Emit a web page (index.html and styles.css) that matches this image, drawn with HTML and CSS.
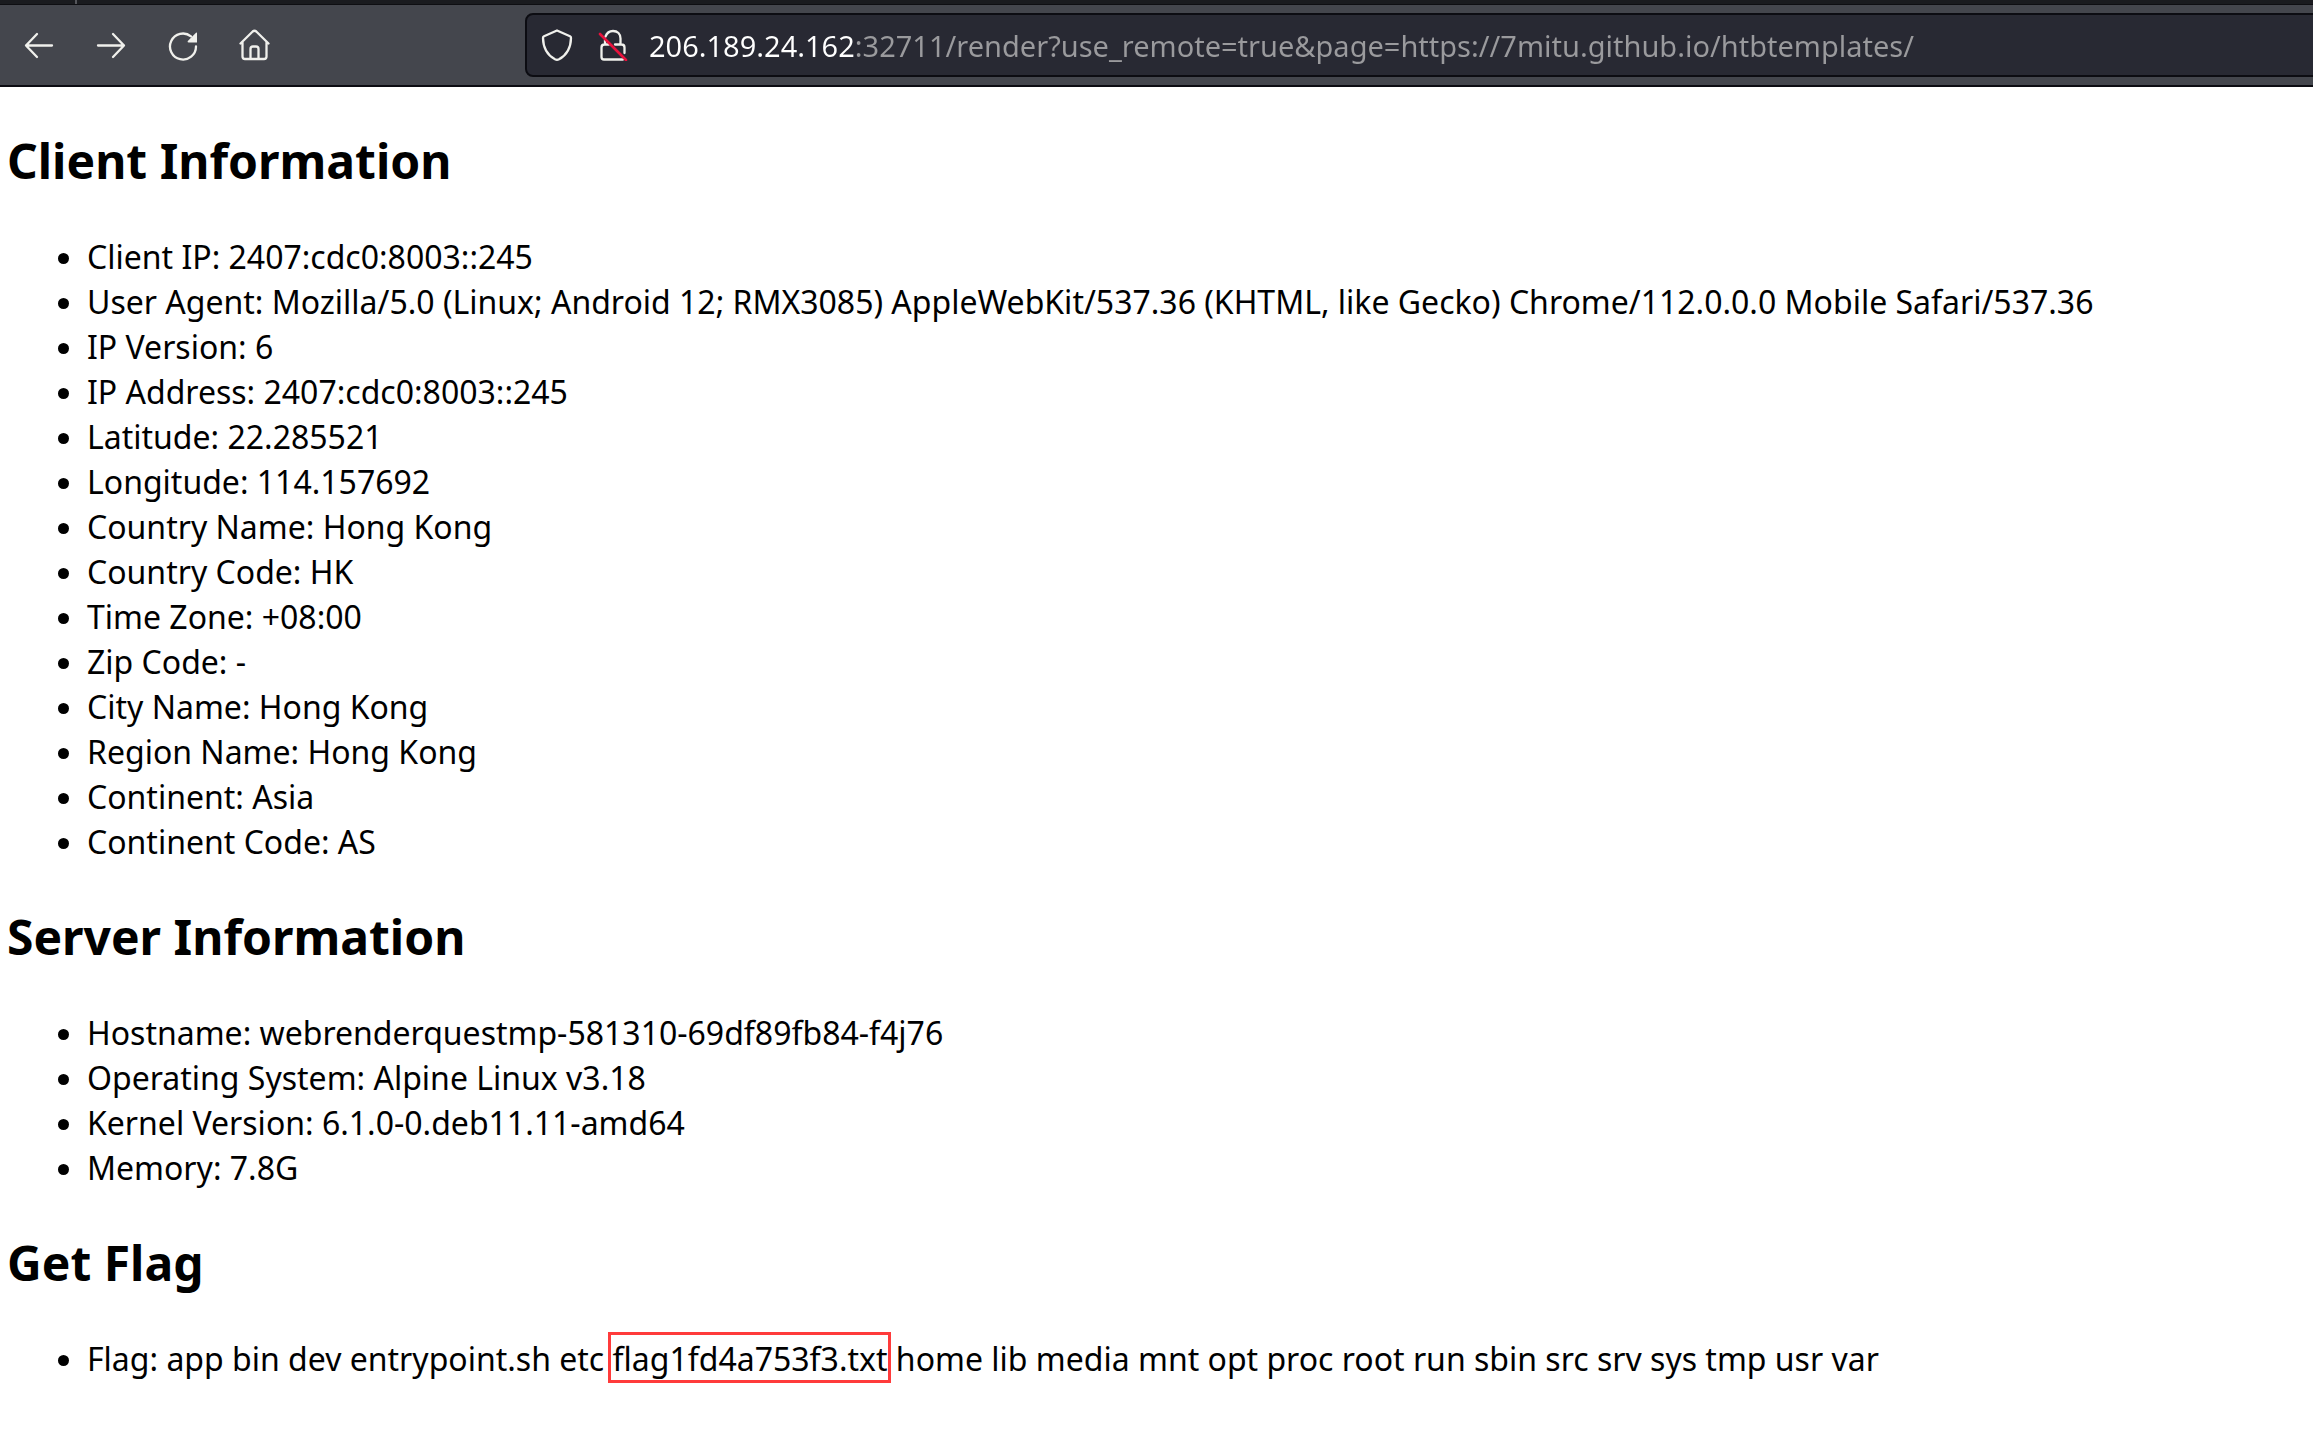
FILE: index.html
```html
<!DOCTYPE html>
<html lang="en">
<head>
<meta charset="utf-8">
<meta name="viewport" content="width=device-width, initial-scale=1">
<title>Client Information</title>
<link rel="stylesheet" href="styles.css">
</head>
<body>
<header class="browser">
  <div class="tabs"><span class="tab-edge"></span></div>
  <nav class="toolbar" aria-label="Browser toolbar">
    <div class="nav-buttons">
      <button class="nav-button" type="button" aria-label="Back">
        <svg class="icon" viewBox="0 0 32 32"><path d="M29 16.500H3M14 5L3 16.500 14 28"/></svg>
      </button>
      <button class="nav-button" type="button" aria-label="Forward">
        <svg class="icon" viewBox="0 0 32 32"><path d="M3 16.500h26M18 5l11 11.500L18 28"/></svg>
      </button>
      <button class="nav-button" type="button" aria-label="Reload">
        <svg class="icon" viewBox="0 0 32 32"><path d="M29 17.500A13 13 0 1 1 24 7.300"/><path class="solid" d="M30 3.500v10h-8.500q-1.500-.5-.7-1.600L29 3.700z"/></svg>
      </button>
      <button class="nav-button" type="button" aria-label="Home">
        <svg class="icon" viewBox="0 0 32 32"><path d="M1.500 14.500L13.700 2.500q1.800-1.500 3.600 0L29.500 14.500M3.500 13v14.500q0 2.500 2.500 2.500h19q2.500 0 2.500-2.500V13M11.500 30V20q0-2.500 2.500-2.500h3q2.500 0 2.500 2.500v10"/></svg>
      </button>
    </div>
    <div class="urlbar">
      <div class="site-icons">
        <svg class="icon" viewBox="0 0 32 32"><path d="M16 1.500l13 5.700q1 .5 1 1.800C29.800 19 25 26.500 18 30.300q-2 1-4 0C7 26.500 2.200 19 2 9q0-1.300 1-1.800z"/></svg>
        <svg class="icon" viewBox="0 0 32 32"><path d="M8.500 7.500C10 3.500 13 2 16 2c4.500 0 7.500 3 7.500 7.500V15M7.500 15.500q-3 0-3 3V28q0 2.500 2.500 2.500h19M18 15.500h6.500q3 0 3 3V24M8 11v4.500h4"/><path class="strike" d="M3 5l26 26"/></svg>
      </div>
      <input class="url" type="text" aria-label="Address" spellcheck="false" value="206.189.24.162:32711/render?use_remote=true&amp;page=https://7mitu.github.io/htbtemplates/">
    </div>
  </nav>
</header>
<main class="page">
  <h2 class="title">Client Information</h2>
  <ul class="facts">
    <li>Client IP: 2407:cdc0:8003::245</li>
    <li>User Agent: Mozilla/5.0 (Linux; Android 12; RMX3085) AppleWebKit/537.36 (KHTML, like Gecko) Chrome/112.0.0.0 Mobile Safari/537.36</li>
    <li>IP Version: 6</li>
    <li>IP Address: 2407:cdc0:8003::245</li>
    <li>Latitude: 22.285521</li>
    <li>Longitude: 114.157692</li>
    <li>Country Name: Hong Kong</li>
    <li>Country Code: HK</li>
    <li>Time Zone: +08:00</li>
    <li>Zip Code: -</li>
    <li>City Name: Hong Kong</li>
    <li>Region Name: Hong Kong</li>
    <li>Continent: Asia</li>
    <li>Continent Code: AS</li>
  </ul>
  <h2 class="title">Server Information</h2>
  <ul class="facts">
    <li>Hostname: webrenderquestmp-581310-69df89fb84-f4j76</li>
    <li>Operating System: Alpine Linux v3.18</li>
    <li>Kernel Version: 6.1.0-0.deb11.11-amd64</li>
    <li>Memory: 7.8G</li>
  </ul>
  <h2 class="title">Get Flag</h2>
  <ul class="facts">
    <li>Flag: app bin dev entrypoint.sh etc <span class="marked">flag1fd4a753f3.txt</span> home lib media mnt opt proc root run sbin src srv sys tmp usr var</li>
  </ul>
</main>
</body>
</html>
```

FILE: styles.css
```css
* {
  box-sizing: border-box;
}

body {
  margin: 0;
  background: #fff;
  color: #000;
  font-family: "Noto Sans", sans-serif;
}

/* Browser chrome */
.browser {
  background: #44464d;
  border-bottom: 2px solid #0c0c12;
  overflow: hidden;
}

.tabs {
  display: flex;
  height: 5px;
  padding-left: 75px;
  background: #1a1b1f;
  border-bottom: 1px solid #0e0e12;
}

.tab-edge {
  width: 2px;
  background: #55565b;
}

.toolbar {
  display: flex;
  align-items: center;
  padding: 8px 0;
}

.nav-buttons {
  display: flex;
  flex: none;
  width: 525px;
  padding-left: 3px;
}

.nav-button {
  display: flex;
  align-items: center;
  justify-content: center;
  width: 72px;
  height: 64px;
  padding: 0;
  border: 0;
  background: none;
}

.icon {
  flex: none;
  width: 32px;
  height: 32px;
  fill: none;
  stroke: #f0f0ec;
  stroke-width: 2.3;
  stroke-linecap: round;
  stroke-linejoin: round;
}

.solid {
  fill: #f0f0ec;
  stroke: none;
}

.strike {
  stroke: #e8113c;
  stroke-width: 2.6;
}

.urlbar {
  display: flex;
  flex: 1;
  align-items: center;
  gap: 20px;
  height: 64px;
  margin-right: -8px;
  padding-left: 14px;
  border: 2px solid #0c0c12;
  border-radius: 8px;
  background: #282933;
}

.site-icons {
  display: flex;
  gap: 24px;
}

/* The host is bright, the rest of the address is dimmed */
.url {
  flex: 1;
  min-width: 0;
  height: 60px;
  padding: 0;
  border: 0;
  outline: 0;
  background: linear-gradient(to right, #fff 207px, #9a9a9d 207px);
  background-clip: text;
  color: #9a9a9d;
  -webkit-text-fill-color: transparent;
  font-family: "Noto Sans", sans-serif;
  font-size: 29px;
}

/* Page content */
.page {
  padding: 1px 7px 40px;
}

.title {
  margin: 40px 0;
  font-size: 48px;
  line-height: 66px;
}

.facts {
  margin: 0;
  padding-left: 80px;
  font-size: 32px;
  line-height: 45px;
}

.marked {
  position: relative;
}

.marked::after {
  content: "";
  position: absolute;
  inset: -5px -3px -3px -5px;
  border: 3px solid #ff3b3b;
}
```
